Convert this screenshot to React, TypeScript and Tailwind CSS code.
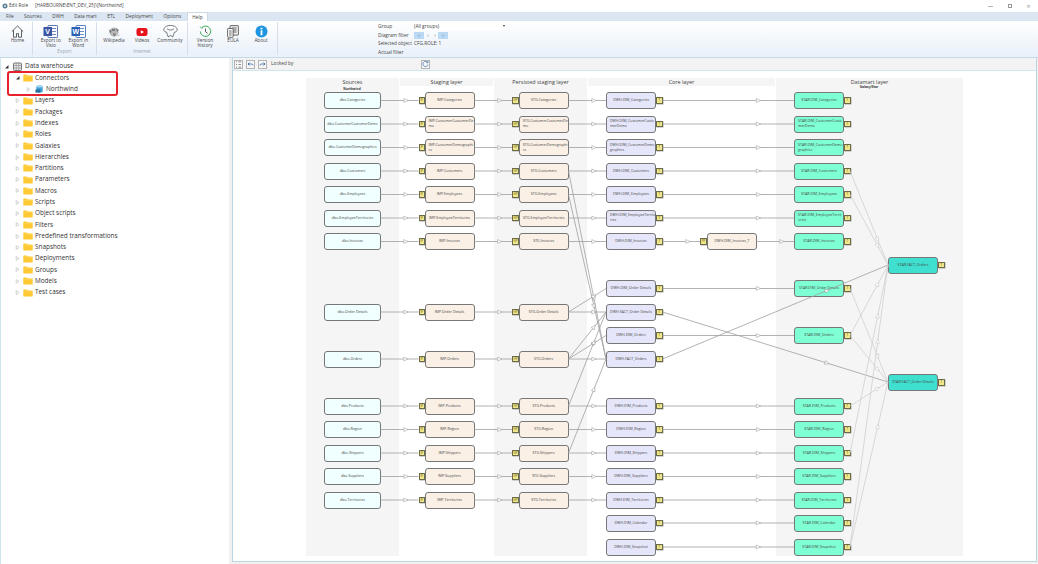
import type { ReactNode } from "react";

const OX = 233;
const OY = 71;

const MENU = ["File", "Sources", "DWH", "Data mart", "ETL", "Deployment", "Options"];
const TREE = ["Layers", "Packages", "Indexes", "Roles", "Galaxies", "Hierarchies", "Partitions", "Parameters", "Macros", "Scripts", "Object scripts", "Filters", "Predefined transformations", "Snapshots", "Deployments", "Groups", "Models", "Test cases"];

const LAYERS = [
  { name: "Sources", w: "w-[93px]", bg: "bg-[#f5f5f5]" },
  { name: "Staging layer", w: "w-[93px]", bg: "bg-white" },
  { name: "Persisted staging layer", w: "w-[93px]", bg: "bg-[#f5f5f5]" },
  { name: "Core layer", w: "w-[187px]", bg: "bg-white" },
  { name: "Datamart layer", w: "w-[187px]", bg: "bg-[#f5f5f5]" },
];

// name, y, and the wrapped label per column where the box is too narrow
const ROWS: { n: string; y: number; imp?: string; stg?: string; dwh?: string; star?: string }[] = [
  { n: "Categories", y: 100.5 },
  { n: "CustomerCustomerDemo", y: 124, imp: "IMP.CustomerCustomerDe\nmo", stg: "STG.CustomerCustomerDe\nmo", dwh: "DWH.DIM_CustomerCusto\nmerDemo", star: "STAR.DIM_CustomerCusto\nmerDemo" },
  { n: "CustomerDemographics", y: 147.5, imp: "IMP.CustomerDemographi\ncs", stg: "STG.CustomerDemographi\ncs", dwh: "DWH.DIM_CustomerDemo\ngraphics", star: "STAR.DIM_CustomerDemo\ngraphics" },
  { n: "Customers", y: 171 },
  { n: "Employees", y: 194.5 },
  { n: "EmployeeTerritories", y: 218, dwh: "DWH.DIM_EmployeeTerrito\nries", star: "STAR.DIM_EmployeeTerrit\nories" },
  { n: "Invoices", y: 241.5 },
  { n: "Order Details", y: 312 },
  { n: "Orders", y: 359 },
  { n: "Products", y: 406 },
  { n: "Region", y: 429.5 },
  { n: "Shippers", y: 453 },
  { n: "Suppliers", y: 476.5 },
  { n: "Territories", y: 500 },
];

const CORE_ONLY = [
  { n: "DWH.DIM_Order Details", y: 288.5 },
  { n: "DWH.FACT_Order Details", y: 312 },
  { n: "DWH.DIM_Orders", y: 335.5 },
  { n: "DWH.FACT_Orders", y: 359 },
  { n: "DWH.DIM_Calendar", y: 523 },
  { n: "DWH.DIM_Snapshot", y: 547 },
];

const STAR_ONLY = [
  { n: "STAR.DIM_Order Details", y: 288.5 },
  { n: "STAR.DIM_Orders", y: 335.5 },
  { n: "STAR.DIM_Calendar", y: 523 },
  { n: "STAR.DIM_Snapshot", y: 547 },
];

const CORE_SKIP = ["Order Details", "Orders"];

type Edge = { a: [number, number]; b: [number, number]; t: number; light?: boolean };

function buildEdges(): Edge[] {
  const out: Edge[] = [];
  for (const r of ROWS) {
    out.push({ a: [380.5, r.y], b: [418.5, r.y], t: 0.67 });
    out.push({ a: [474, r.y], b: [512, r.y], t: 0.68 });
    if (!CORE_SKIP.includes(r.n)) {
      out.push({ a: [568.5, r.y], b: [606, r.y], t: 0.68 });
      if (r.n !== "Invoices") out.push({ a: [662.5, r.y], b: [794, r.y], t: 0.73 });
    }
  }
  for (const y of [288.5, 335.5, 523, 547]) out.push({ a: [662.5, y], b: [794, y], t: 0.73 });
  // invoices transformation
  out.push({ a: [662.5, 241.5], b: [700, 241.5], t: 0.68 });
  out.push({ a: [756.5, 241.5], b: [794, 241.5], t: 0.68 });
  // fan in to the core facts
  const toCore: [number, number, number][] = [
    [171, 359, 0.68], [194.5, 359, 0.68], [312, 288.5, 0.68], [312, 312, 0.68],
    [359, 312, 0.68], [359, 335.5, 0.68], [359, 359, 0.68], [406, 312, 0.68], [453, 359, 0.68],
  ];
  for (const [y1, y2, t] of toCore) out.push({ a: [568.5, y1], b: [606, y2], t });
  // core facts to the datamart facts
  out.push({ a: [662.5, 359], b: [888, 265], t: 0.73 });
  out.push({ a: [662.5, 312], b: [888, 382], t: 0.73 });
  // dimensions to the datamart facts
  const toFact: [number, number][] = [
    [171, 265], [194.5, 265], [335.5, 265], [453, 265], [547, 265],
    [288.5, 382], [335.5, 382], [406, 382], [547, 382],
  ];
  for (const [y1, y2] of toFact) out.push({ a: [850, y1], b: [888, y2], t: 0.73, light: true });
  return out;
}

function Connectors() {
  const edges = buildEdges();
  return (
    <svg className="absolute inset-0 pointer-events-none" width={804} height={489} viewBox={`${OX} ${OY} 804 489`}>
      {edges.map((e, i) => {
        const mx = e.a[0] + (e.b[0] - e.a[0]) * e.t;
        const my = e.a[1] + (e.b[1] - e.a[1]) * e.t;
        const deg = (Math.atan2(e.b[1] - e.a[1], e.b[0] - e.a[0]) * 180) / Math.PI;
        return (
          <g key={i}>
            <line x1={e.a[0]} y1={e.a[1]} x2={e.b[0]} y2={e.b[1]} stroke={e.light ? "#cfcfcf" : "#a0a0a0"} strokeWidth={0.8} />
            <polygon points="-2.2,-1.9 2.2,0 -2.2,1.9" fill="#fff" stroke={e.light ? "#c4c4c4" : "#949494"} strokeWidth={0.5} transform={`translate(${mx} ${my}) rotate(${deg})`} />
          </g>
        );
      })}
    </svg>
  );
}

function Node({ label, x, y, w = 50, bg }: { label: string; x: number; y: number; w?: number; bg: string }) {
  const wrapped = label.includes("\n");
  return (
    <div
      className={`absolute h-[17px] flex items-center rounded-[3px] border border-[#777] whitespace-pre-line leading-[4.8px] text-[3.6px] text-[#444] ${wrapped ? "justify-start text-left pl-[3px]" : "justify-center text-center"} ${bg}`}
      style={{ left: x - OX, top: y - 8.5 - OY, width: w }}
    >
      {label}
    </div>
  );
}

function Badge({ label, x, y, w = 6.5 }: { label: string; x: number; y: number; w?: number }) {
  return (
    <div
      className="absolute h-[6.5px] flex items-center justify-center bg-[#f0e68c] border-[0.5px] border-[#6b6b4a] text-[3px] leading-none text-[#5a5200] shadow-[0.5px_0.5px_0_#aaa]"
      style={{ left: x - OX, top: y - 3.25 - OY, width: w }}
    >
      {label}
    </div>
  );
}

function Diagram() {
  return (
    <div className="relative flex-1 bg-white overflow-hidden">
      {/* Layer bands */}
      <div className="flex pl-[73px] pt-[7px] gap-[1px] h-[485px]">
        {LAYERS.map((l) => (
          <div key={l.name} className={`${l.w} flex flex-col`}>
            <div className="h-[8px] bg-[#f5f5f5] flex items-center justify-center text-[5.4px] text-[#444]">{l.name}</div>
            <div className={`flex-1 ${l.bg}`} />
          </div>
        ))}
      </div>

      <div className="absolute left-[119px] top-[16px] w-[0px] flex justify-center text-[3.2px] font-bold text-[#333] whitespace-nowrap">Northwind</div>
      <div className="absolute left-[636px] top-[14px] w-[0px] flex justify-center text-[3.2px] font-bold text-[#333] whitespace-nowrap">Galaxy/Star</div>

      {ROWS.map((r) => (
        <div key={r.n}>
          <Node label={`dbo.${r.n}`} x={324} y={r.y} w={57} bg="bg-[#f0ffff]" />
          <Badge label="IP" x={418.5} y={r.y} />
          <Node label={r.imp ?? `IMP.${r.n}`} x={424.5} y={r.y} bg="bg-[#faf0e6]" />
          <Badge label="HP" x={512} y={r.y} w={7} />
          <Node label={r.stg ?? `STG.${r.n}`} x={518.7} y={r.y} bg="bg-[#faf0e6]" />
          {!CORE_SKIP.includes(r.n) && (
            <>
              <Node label={r.dwh ?? `DWH.DIM_${r.n}`} x={606} y={r.y} bg="bg-[#e6e6fa]" />
              <Badge label="T" x={656} y={r.y} />
              <Node label={r.star ?? `STAR.DIM_${r.n}`} x={794} y={r.y} bg="bg-[#7fffd4]" />
              <Badge label="T" x={844} y={r.y} />
            </>
          )}
        </div>
      ))}

      {CORE_ONLY.map((c) => (
        <div key={c.n}>
          <Node label={c.n} x={606} y={c.y} bg="bg-[#e6e6fa]" />
          <Badge label="T" x={656} y={c.y} />
        </div>
      ))}
      {STAR_ONLY.map((c) => (
        <div key={c.n}>
          <Node label={c.n} x={794} y={c.y} bg="bg-[#7fffd4]" />
          <Badge label="T" x={844} y={c.y} />
        </div>
      ))}

      <Badge label="PP" x={700} y={241.5} w={7} />
      <Node label="DWH.DIM_Invoices_T" x={707} y={241.5} bg="bg-[#faf0e6]" />

      <Node label="STAR.FACT_Orders" x={888} y={265} bg="bg-[#40e0d0]" />
      <Badge label="T" x={938} y={265} />
      <Node label="STAR.FACT_Order Details" x={888} y={382.5} bg="bg-[#40e0d0]" />
      <Badge label="T" x={938} y={382.5} />

      <Connectors />
    </div>
  );
}

function Folder() {
  return (
    <svg width="10" height="8" viewBox="0 0 10 8" className="shrink-0">
      <path d="M0.3 1a.6.6 0 0 1 .6-.6h2.8l1 1h4.4a.6.6 0 0 1 .6.6v5a.6.6 0 0 1-.6.6H.9a.6.6 0 0 1-.6-.6z" fill="#ffc933" />
      <path d="M0.3 2.2h9.4" stroke="#ffdc73" strokeWidth="0.5" />
    </svg>
  );
}

function Arrow({ open }: { open?: boolean }) {
  return open ? (
    <svg width="5" height="5" viewBox="0 0 5 5" className="shrink-0">
      <path d="M4.5 1v3.5H1z" fill="#333" />
    </svg>
  ) : (
    <svg width="5" height="5" viewBox="0 0 5 5" className="shrink-0">
      <path d="M1.2 .6 4 2.5 1.2 4.4z" fill="#fff" stroke="#a6a6a6" strokeWidth="0.5" />
    </svg>
  );
}

function TreeRow({ indent, open, icon, label }: { indent: string; open?: boolean; icon: ReactNode; label: string }) {
  return (
    <div className={`h-[11.3px] flex items-center ${indent}`}>
      <Arrow open={open} />
      {icon}
      <span className="ml-[2px] text-[6.4px] leading-none text-[#333] whitespace-nowrap">{label}</span>
    </div>
  );
}

function TreePanel() {
  return (
    <div className="relative w-[229px] h-full bg-white border-l border-[#cfe6ef] pt-[3px] overflow-hidden">
      <TreeRow
        indent="pl-[3px]"
        open
        label="Data warehouse"
        icon={
          <svg width="11" height="10" viewBox="0 0 11 10" className="ml-[3px] shrink-0">
            <rect x="1.5" y="1" width="8" height="7.5" rx="1" fill="#e8e8e8" stroke="#555" strokeWidth="0.8" />
            <path d="M1.5 3.5h8M1.5 6h8M4.2 1v7.5M6.8 1v7.5" stroke="#777" strokeWidth="0.5" />
          </svg>
        }
      />
      <TreeRow indent="pl-[14px]" open label="Connectors" icon={<span className="ml-[3px] flex"><Folder /></span>} />
      <TreeRow
        indent="pl-[25px]"
        label="Northwind"
        icon={
          <svg width="9" height="10" viewBox="0 0 10 10" className="ml-[4px] shrink-0">
            <path d="M1.5 2c0-1.2 7-1.2 7 0v6c0 1.2-7 1.2-7 0z" fill="#3f9fd6" />
            <ellipse cx="5" cy="2.2" rx="3.5" ry="1" fill="#a9dcf5" />
            <rect x="0.5" y="5.5" width="5.5" height="3.5" fill="#2a6f9e" />
          </svg>
        }
      />
      {TREE.map((t) => (
        <TreeRow key={t} indent="pl-[14px]" label={t} icon={<span className="ml-[3px] flex"><Folder /></span>} />
      ))}
      {/* Highlight drawn over the tree */}
      <div className="absolute left-[6px] top-[13px] w-[111px] h-[25px] rounded-[3px] border-2 border-[#e8202a]" />
    </div>
  );
}

function RibbonButton({ label, icon }: { label: string; icon: ReactNode }) {
  return (
    <div className="w-[28px] flex flex-col items-center pt-[3px]">
      <div className="h-[13px] flex items-center justify-center">{icon}</div>
      <div className="text-[4.7px] leading-[5.2px] text-[#444] text-center whitespace-pre-line">{label}</div>
    </div>
  );
}

function DocIcon({ letter, from }: { letter: string; from: string }) {
  return (
    <svg width="15" height="13" viewBox="0 0 15 13">
      <rect x="5" y="0.5" width="9.5" height="12" rx="0.6" fill="#fff" stroke={from} strokeWidth="0.8" />
      <path d="M7 3.5h6M7 6.5h6M7 9.5h6" stroke={from} strokeWidth="0.7" />
      <rect x="0.5" y="2" width="8.5" height="9" fill={from} />
      <text x="4.7" y="9" textAnchor="middle" fontSize="7" fontWeight="700" fill="#fff" fontFamily="Liberation Sans, sans-serif">{letter}</text>
    </svg>
  );
}

function Ribbon() {
  return (
    <div className="h-[37px] flex bg-gradient-to-b from-white to-[#e8f0f9] border-b border-[#c5dbe8]">
      <div className="w-[33px] h-[33px] mt-[1px] flex justify-center border-r border-[#d6dfe9] pl-[4px] pr-[1px]">
        <RibbonButton
          label="Home"
          icon={
            <svg width="13" height="13" viewBox="0 0 13 13" fill="none" stroke="#3a3a3a" strokeWidth="0.8">
              <path d="M.8 6.6 6.5 1l5.7 5.6" />
              <path d="M2.5 5.2v7h3v-3.6h2v3.6h3v-7" />
            </svg>
          }
        />
      </div>

      <div className="w-[64px] h-[33px] mt-[1px] flex flex-col border-r border-[#d6dfe9] px-[4px]">
        <div className="flex flex-1">
          <RibbonButton label={"Export to\nVisio"} icon={<DocIcon letter="V" from="#3955a3" />} />
          <RibbonButton label={"Export in\nWord"} icon={<DocIcon letter="W" from="#2b5fb3" />} />
        </div>
        <div className="text-[4.7px] leading-none text-center text-[#9aa5b1] pb-[1px]">Export</div>
      </div>

      <div className="w-[91px] h-[33px] mt-[1px] flex flex-col border-r border-[#d6dfe9] pl-[3px]">
        <div className="flex flex-1">
          <RibbonButton
            label="Wikipedia"
            icon={
              <svg width="14" height="12" viewBox="0 0 14 12">
                <circle cx="7" cy="6" r="4.5" fill="#b8b8b8" />
                <path d="M2 3.5 5 5 3 7.5ZM9 2l3 2-2 2ZM6 7l3 1-2 3ZM5 3h3v2H5Z" fill="#7c7c7c" />
                <path d="M10 8l3 1-2 2Z" fill="#d0d0d0" />
              </svg>
            }
          />
          <RibbonButton
            label="Videos"
            icon={
              <svg width="12" height="12" viewBox="0 0 12 12">
                <rect x="0.5" y="2" width="11" height="8" rx="2.2" fill="#e8121c" />
                <path d="M4.8 4.2v3.6L8 6z" fill="#fff" />
              </svg>
            }
          />
          <RibbonButton
            label="Community"
            icon={
              <svg width="15" height="13" viewBox="0 0 15 13" fill="none" stroke="#555" strokeWidth="0.8">
                <path d="M3.5 1.2c2-1 6-1 8 0 1.5.8 2.7 2 2.7 3.5 0 1.6-1.3 2.3-2.7 2.4-.6 1.6-1.2 3-1.5 4.6H9c-.3-1-.8-1.3-1.5-1.3S6.3 11 6 11.7H5c-.3-1.6-.9-3-1.5-4.6C2.1 7 .8 6.3.8 4.7.8 3.2 2 2 3.5 1.2Z" />
                <path d="M4 3.5c1 1 2 1.5 3.5 1.5S10 4.5 11 3.5" />
              </svg>
            }
          />
        </div>
        <div className="text-[4.7px] leading-none text-center text-[#9aa5b1] pb-[1px] pr-[3px]">Internet</div>
      </div>

      <div className="w-[90px] h-[33px] mt-[1px] flex pl-[3px] border-r border-[#d6dfe9]">
        <RibbonButton
          label={"Version\nhistory"}
          icon={
            <svg width="13" height="13" viewBox="0 0 13 13" fill="none" strokeWidth="1">
              <path d="M2.6 2.8A5.2 5.2 0 1 1 1.3 6.5" stroke="#45a85a" />
              <path d="M.9 1.5 2.6 3.2 4.4 2.2" stroke="#45a85a" strokeWidth="0.8" />
              <path d="M6.5 3.5v3.2l2 1.5" stroke="#333" strokeWidth="0.8" />
            </svg>
          }
        />
        <RibbonButton
          label="EULA"
          icon={
            <svg width="12" height="13" viewBox="0 0 12 13" fill="none" stroke="#444" strokeWidth="0.8">
              <rect x="3" y=".6" width="8.4" height="9.5" rx=".6" fill="#eee" />
              <path d="M5 3h4.5M5 5h4.5M5 7h4.5" />
              <rect x=".6" y="3.5" width="5.5" height="8.8" rx=".6" fill="#fff" />
              <path d="M2 6h2.7M2 8h2.7M2 10h2.7" />
            </svg>
          }
        />
        <RibbonButton
          label="About"
          icon={
            <svg width="13" height="13" viewBox="0 0 13 13">
              <circle cx="6.5" cy="6.5" r="6" fill="#1e95e0" />
              <rect x="5.6" y="5.3" width="1.8" height="5" fill="#fff" />
              <rect x="5.6" y="2.7" width="1.8" height="1.7" fill="#fff" />
            </svg>
          }
        />
      </div>

      {/* Filter panel */}
      <div className="ml-[100px] pt-[1px] flex flex-col text-[4.8px] text-[#444] whitespace-nowrap">
        <div className="h-[9px] flex items-center">
          <span className="w-[36px]">Group</span>
          <div className="w-[92px] h-[7px] bg-white flex items-center justify-between pr-[1px]">
            <span>(All groups)</span>
            <span className="w-0 h-0 border-x-[1.5px] border-x-transparent border-t-[2px] border-t-[#333]" />
          </div>
        </div>
        <div className="h-[9px] flex items-center">
          <span className="w-[36px]">Diagram filter</span>
          <span className="w-[10px] h-[7px] bg-[#b9d9f5] flex items-center justify-center text-[#7a93ad]">«</span>
          <span className="w-[8px] text-center">‹</span>
          <span className="w-[6px] text-center">›</span>
          <span className="w-[10px] h-[7px] bg-[#b9d9f5] flex items-center justify-center text-[#7a93ad]">»</span>
        </div>
        <div className="h-[9px] flex items-center">
          <span className="w-[36px]">Selected object</span>
          <span>CFG.ROLE: 1</span>
        </div>
        <div className="h-[9px] flex items-center">
          <span className="w-[36px]">Actual filter</span>
        </div>
      </div>
    </div>
  );
}

function ToolButton({ children, className = "" }: { children: ReactNode; className?: string }) {
  return (
    <div className={`w-[9px] h-[9px] shrink-0 flex items-center justify-center bg-[#f7f7f7] border border-[#b4b4b4] ${className}`}>
      {children}
    </div>
  );
}

function Toolbar() {
  return (
    <div className="h-[13px] flex items-center pl-[1px] bg-[#f3f3f3] border-b border-[#cfe6ef]">
      <ToolButton>
        <svg width="7" height="7" viewBox="0 0 7 7" fill="none" stroke="#444" strokeWidth="0.6">
          <path d="M1 .8h1M1 3.5h1M1 6.2h1M3.5 .8H6M3.5 3.5H6M3.5 6.2H6" />
        </svg>
      </ToolButton>
      <ToolButton className="ml-[3px]">
        <svg width="7" height="7" viewBox="0 0 7 7" fill="none" stroke="#2d5f9e" strokeWidth="0.8">
          <path d="M1 3h3.5c1 0 1.5.6 1.500 1.500M2.500 1.500 1 3l1.500 1.500" />
        </svg>
      </ToolButton>
      <ToolButton className="ml-[3px]">
        <svg width="7" height="7" viewBox="0 0 7 7" fill="none" stroke="#2d5f9e" strokeWidth="0.8">
          <path d="M6 3H2.5C1.5 3 1 3.600 1 4.500M4.500 1.500 6 3 4.500 4.500" />
        </svg>
      </ToolButton>
      <span className="ml-[4px] w-[150px] shrink-0 text-[4.8px] text-[#444]">Locked by</span>
      <ToolButton>
        <svg width="8" height="8" viewBox="0 0 8 8" fill="none" stroke="#2d5f9e" strokeWidth="0.8">
          <path d="M6.5 2.2A3 3 0 1 0 7 4.5M6.8.6v1.900H4.900" />
        </svg>
      </ToolButton>
    </div>
  );
}

export default function App() {
  return (
    <div className="w-[1038px] h-[564px] flex flex-col overflow-hidden bg-[#f1f1f1] font-['Open_Sans',sans-serif]">
      {/* Title bar */}
      <div className="h-[12px] bg-white flex items-center pl-[2px] text-[4.7px] text-[#444]">
        <svg width="6" height="6" viewBox="0 0 6 6">
          <circle cx="3" cy="3" r="2.5" fill="#5c7f96" />
          <circle cx="3" cy="3" r="1" fill="#d9e6ee" />
        </svg>
        <span className="ml-[1px]">Edit Role</span>
        <span className="ml-[7px]">[HARBOURNE\ENT_DEV_25]\[Northwind]</span>
        <div className="ml-auto flex items-center text-[#b5b5b5] pr-[7px]">
          <span className="w-[5px] h-[0.5px] bg-[#b5b5b5]" />
          <span className="ml-[15px] w-[4px] h-[4px] border-[0.5px] border-[#999]" />
          <span className="ml-[14px] relative w-[5px] h-[5px] flex items-center justify-center text-[7px] leading-none text-[#999]">×</span>
        </div>
      </div>

      {/* Menu */}
      <div className="h-[9px] flex items-end bg-[#dce6f2] text-[4.8px] text-[#444] pl-[6px]">
        {MENU.map((m) => (
          <span key={m} className="mr-[10.5px] h-[9px] leading-[9px]">{m}</span>
        ))}
        <span className="-ml-[4.5px] h-[9px] leading-[9px] px-[4px] bg-white border-x border-t border-[#ccd8e5]">Help</span>
      </div>

      <Ribbon />

      {/* Body */}
      <div className="flex-1 min-h-0 flex">
        <TreePanel />
        <div className="ml-[3px] mr-[1px] mb-[2px] flex-1 flex flex-col border-l border-r border-b border-[#b9d7e3]">
          <Toolbar />
          <Diagram />
        </div>
      </div>
    </div>
  );
}
